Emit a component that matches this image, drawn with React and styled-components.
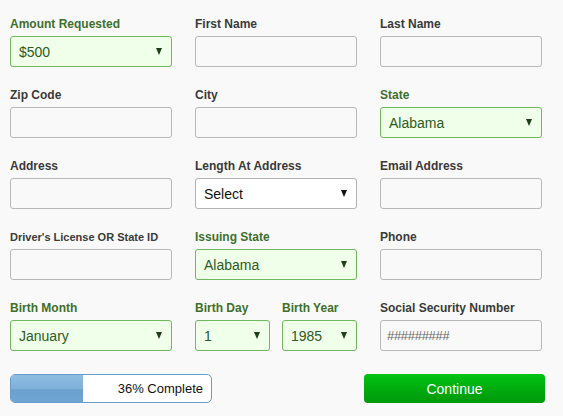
import React from "react";
import styled, { createGlobalStyle } from "styled-components";

const GlobalStyle = createGlobalStyle`
  html, body {
    margin: 0;
    padding: 0;
    background: #f9f9f9;
    font-family: Arial, "Liberation Sans", sans-serif;
  }
`;

const Page = styled.div`
  width: 563px;
  height: 416px;
  box-sizing: border-box;
  padding: 17px 0 0 10px;
  background: #f9f9f9;
`;

const Grid = styled.div`
  display: grid;
  grid-template-columns: repeat(3, 162px);
  column-gap: 23px;
  row-gap: 21px;
`;

const Field = styled.div`
  display: flex;
  flex-direction: column;
`;

const Label = styled.div`
  font-size: ${(p) => (p.$small ? "11px" : "12px")};
  font-weight: bold;
  line-height: 15px;
  height: 15px;
  margin-bottom: 4px;
  color: ${(p) => (p.$green ? "#3f6f2c" : "#3a3a3a")};
  white-space: nowrap;
`;

const TextBox = styled.input`
  box-sizing: border-box;
  width: 100%;
  height: 31px;
  margin: 0;
  border: 1px solid #b8b8b8;
  border-radius: 3px;
  background: #f9f9f9;
  padding: 0 6px;
  font-family: Arial, "Liberation Sans", sans-serif;
  font-size: 13px;
  color: #555;
  outline: none;
  &::placeholder {
    color: #666;
    letter-spacing: -0.3px;
  }
`;

const SelectBox = styled.div`
  box-sizing: border-box;
  width: 100%;
  height: 31px;
  display: flex;
  align-items: center;
  justify-content: space-between;
  padding: 0 9px 0 8px;
  border: 1px solid ${(p) => (p.$green ? "#6fb85c" : "#b3b3b3")};
  border-radius: 3px;
  background: ${(p) => (p.$green ? "#efffe9" : "#ffffff")};
  color: ${(p) => (p.$green ? "#2f5a22" : "#111")};
  font-size: 14px;
`;

const Arrow = styled.span`
  width: 0;
  height: 0;
  border-left: 3.5px solid transparent;
  border-right: 3.5px solid transparent;
  border-top: 7px solid ${(p) => (p.$green ? "#1f3f17" : "#111")};
`;

const Pair = styled.div`
  display: grid;
  grid-template-columns: 75px 75px;
  column-gap: 12px;
`;

const Footer = styled.div`
  display: flex;
  align-items: center;
  justify-content: space-between;
  width: 535px;
  margin-top: 23px;
`;

const Progress = styled.div`
  position: relative;
  box-sizing: border-box;
  width: 202px;
  height: 29px;
  border: 1px solid #6a9ccb;
  border-radius: 5px;
  background: #fff;
  overflow: hidden;
  display: flex;
  align-items: center;
  justify-content: flex-end;
  padding-right: 8px;
  font-size: 13px;
  color: #111;
`;

const Fill = styled.div`
  position: absolute;
  left: 0;
  top: 0;
  bottom: 0;
  background: linear-gradient(to bottom, #8fbde2 0%, #7fb0da 50%, #6aa1cf 55%, #6ea5d2 100%);
`;

const ProgressText = styled.span`
  position: relative;
`;

const Continue = styled.button`
  width: 181px;
  height: 29px;
  border: none;
  border-radius: 4px;
  background: linear-gradient(to bottom, #00c413 0%, #00a80d 60%, #009a0a 100%);
  color: #fff;
  font-family: Arial, "Liberation Sans", sans-serif;
  font-size: 14px;
  cursor: pointer;
`;

function Select({ value, green }) {
  return (
    <SelectBox $green={green}>
      <span>{value}</span>
      <Arrow $green={green} />
    </SelectBox>
  );
}

export default function App() {
  const pct = 36;
  return (
    <Page>
      <GlobalStyle />
      <Grid>
        <Field>
          <Label $green>Amount Requested</Label>
          <Select value="$500" green />
        </Field>
        <Field>
          <Label>First Name</Label>
          <TextBox />
        </Field>
        <Field>
          <Label>Last Name</Label>
          <TextBox />
        </Field>

        <Field>
          <Label>Zip Code</Label>
          <TextBox />
        </Field>
        <Field>
          <Label>City</Label>
          <TextBox />
        </Field>
        <Field>
          <Label $green>State</Label>
          <Select value="Alabama" green />
        </Field>

        <Field>
          <Label>Address</Label>
          <TextBox />
        </Field>
        <Field>
          <Label>Length At Address</Label>
          <Select value="Select" />
        </Field>
        <Field>
          <Label>Email Address</Label>
          <TextBox />
        </Field>

        <Field>
          <Label $small>Driver's License OR State ID</Label>
          <TextBox />
        </Field>
        <Field>
          <Label $green>Issuing State</Label>
          <Select value="Alabama" green />
        </Field>
        <Field>
          <Label>Phone</Label>
          <TextBox />
        </Field>

        <Field>
          <Label $green>Birth Month</Label>
          <Select value="January" green />
        </Field>
        <Pair>
          <Field>
            <Label $green>Birth Day</Label>
            <Select value="1" green />
          </Field>
          <Field>
            <Label $green>Birth Year</Label>
            <Select value="1985" green />
          </Field>
        </Pair>
        <Field>
          <Label>Social Security Number</Label>
          <TextBox placeholder="#########" />
        </Field>
      </Grid>
      <Footer>
        <Progress>
          <Fill style={{ width: `${pct}%` }} />
          <ProgressText>{pct}% Complete</ProgressText>
        </Progress>
        <Continue>Continue</Continue>
      </Footer>
    </Page>
  );
}
